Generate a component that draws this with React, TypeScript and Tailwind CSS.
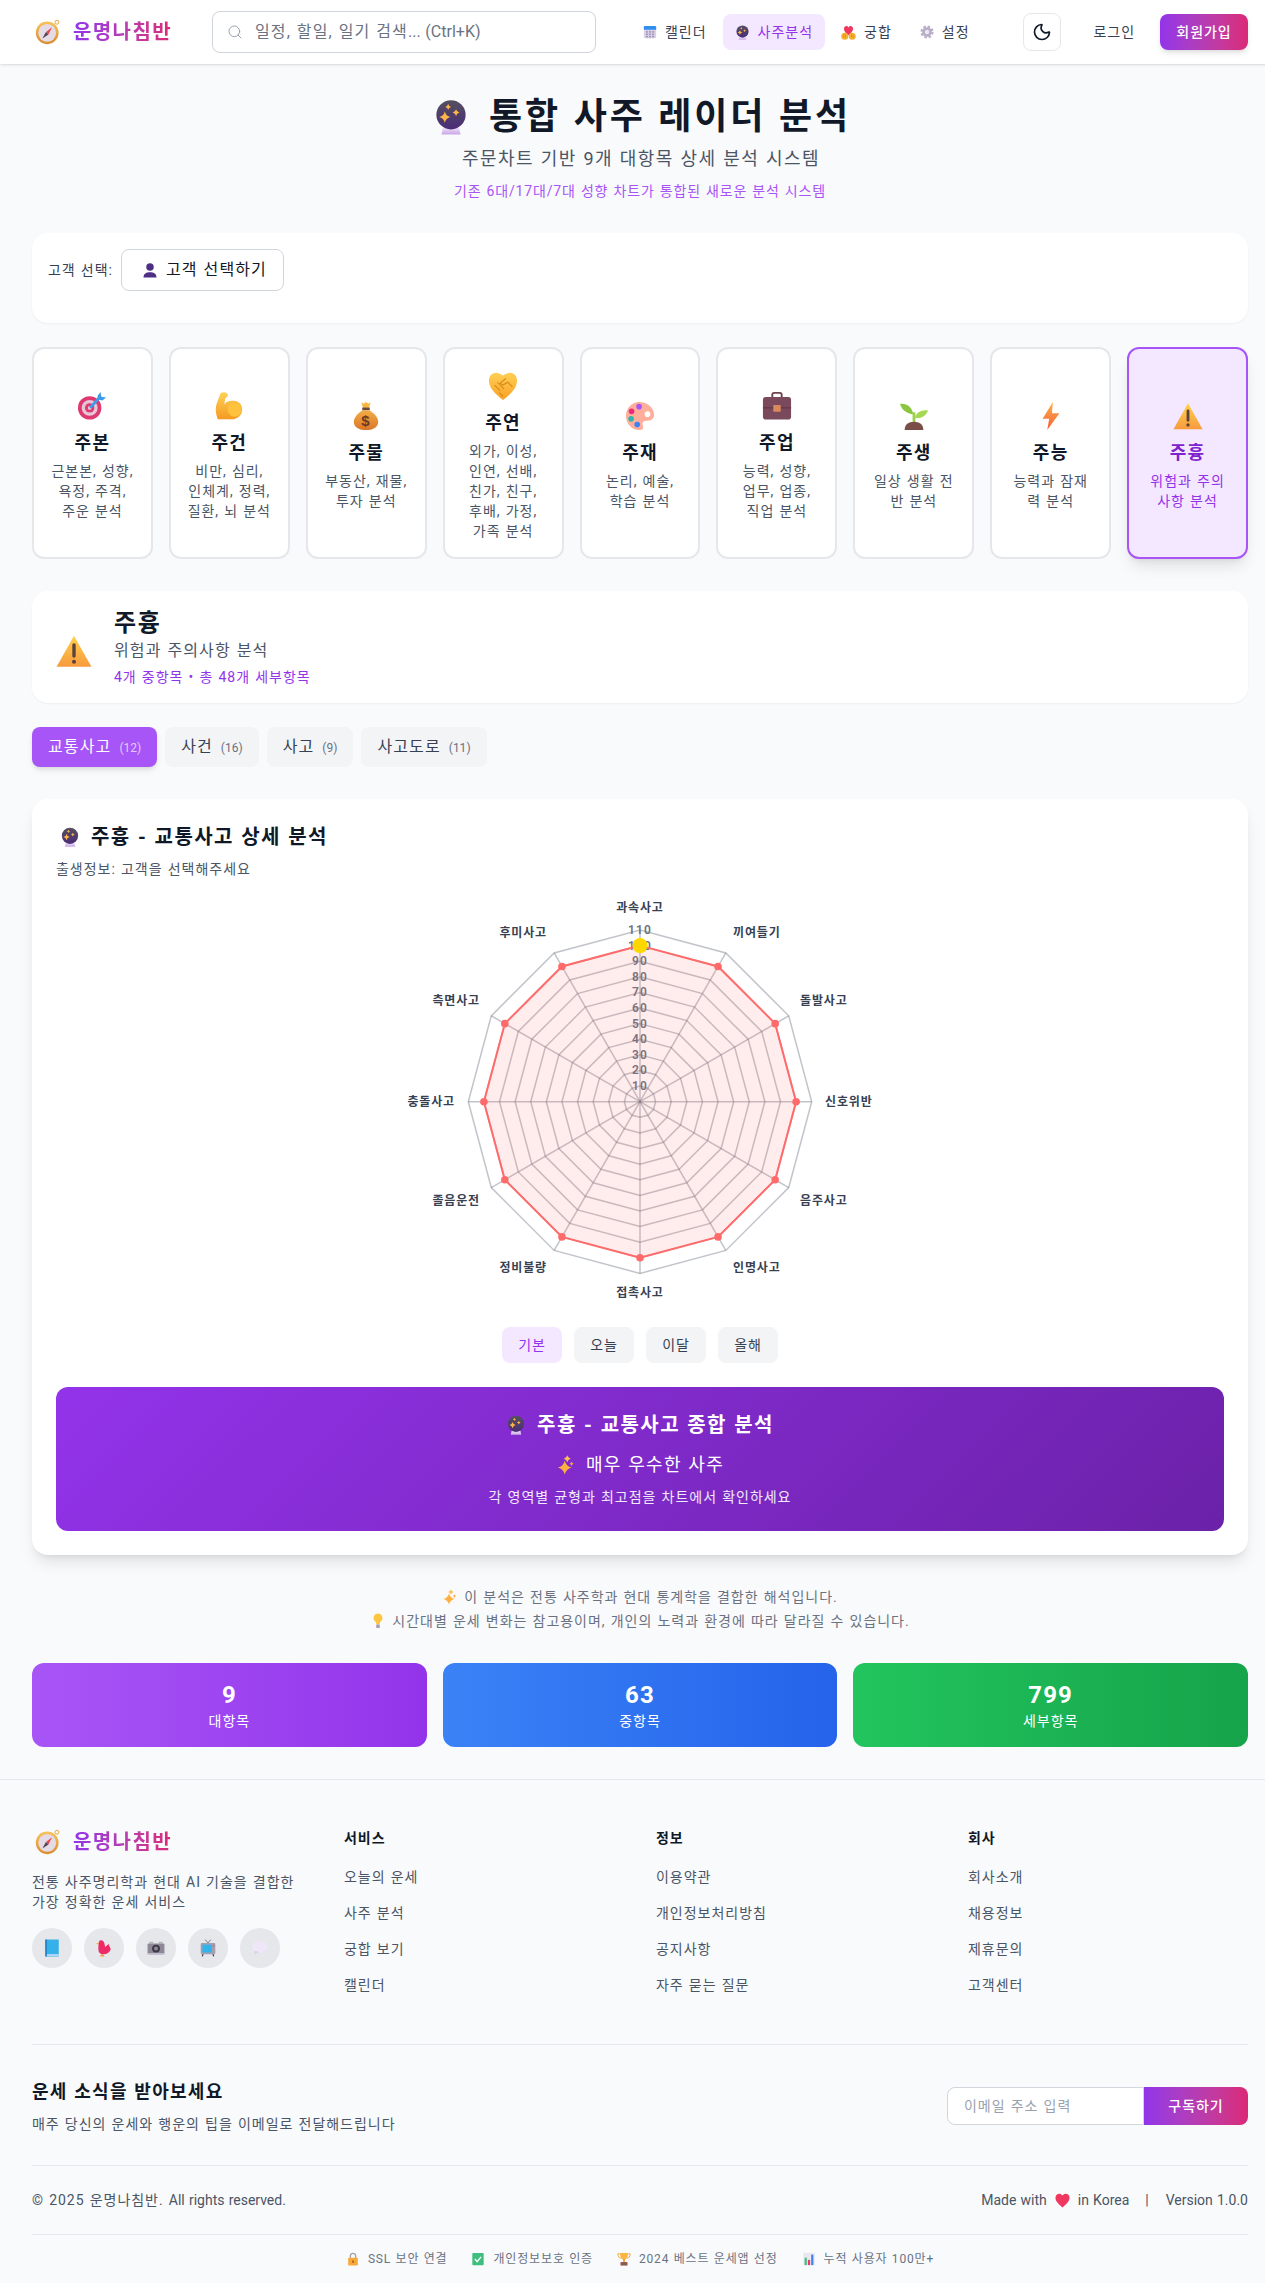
import { Moon, Search } from "lucide-react";
import type { ReactNode } from "react";

type IconProps = { size?: number; className?: string };

function Svg({ size = 16, className = "", children }: IconProps & { children: ReactNode }) {
  return (
    <svg viewBox="0 0 32 32" width={size} height={size} className={`inline-block shrink-0 ${className}`}>
      {children}
    </svg>
  );
}

function Grad({ id, from, to, x2 = 0, y2 = 1 }: { id: string; from: string; to: string; x2?: number; y2?: number }) {
  return (
    <linearGradient id={id} x1="0" y1="0" x2={x2} y2={y2}>
      <stop offset="0" stopColor={from} />
      <stop offset="1" stopColor={to} />
    </linearGradient>
  );
}

const star = (x: number, y: number, r: number) =>
  `M${x} ${y - r}Q${x + r * 0.2} ${y - r * 0.2} ${x + r} ${y}Q${x + r * 0.2} ${y + r * 0.2} ${x} ${y + r}Q${x - r * 0.2} ${y + r * 0.2} ${x - r} ${y}Q${x - r * 0.2} ${y - r * 0.2} ${x} ${y - r}Z`;

const Compass = (p: IconProps) => (
  <Svg {...p}>
    <defs><Grad id="cmp" from="#f8c45c" to="#d98a2e" /></defs>
    <circle cx="27" cy="4" r="2.4" fill="none" stroke="#e9a63f" strokeWidth="1.2" />
    <circle cx="15" cy="17" r="14" fill="url(#cmp)" />
    <circle cx="15" cy="17" r="11" fill="#e4dbe6" />
    <path d="M21 10l-4.500 9-3-3z" fill="#e5484d" />
    <path d="M9 24l4.500-8 3 3z" fill="#4b4453" />
  </Svg>
);

const Ball = (p: IconProps) => (
  <Svg {...p}>
    <defs>
      <Grad id="ball" from="#55505f" to="#4a2c78" />
      <Grad id="base" from="#f1e4fb" to="#c9a8e6" />
    </defs>
    <path d="M9 25h14l1.500 6.500h-17z" fill="url(#base)" />
    <circle cx="16" cy="14" r="13" fill="url(#ball)" />
    <path d={star(10.500, 16, 5)} fill="#fdb748" />
    <path d={star(20.500, 12, 3)} fill="#fdb748" />
    <path d={star(13.500, 7, 2.500)} fill="#fdb748" />
  </Svg>
);

const Calendar = (p: IconProps) => (
  <Svg {...p}>
    <rect x="2" y="2" width="28" height="28" rx="3" fill="#d8d0e6" />
    <path d="M2 11V5a3 3 0 0 1 3-3h22a3 3 0 0 1 3 3v6z" fill="#2f8ff0" />
    <g fill="#9c8fb3">
      {[7, 14, 21].flatMap((x) =>
        [14, 19.500, 25].map((y) => <rect key={`${x}-${y}`} x={x} y={y} width="4" height="3.500" />)
      )}
    </g>
  </Svg>
);

const HeartHands = (p: IconProps) => (
  <Svg {...p}>
    <path d="M16 22C6 15 5 8 7.500 4.500 10.500 1 15 2 16 6c1-4 5.500-5 8.500-1.500C27 8 26 15 16 22z" fill="#f0375f" />
    <circle cx="8" cy="24" r="7.500" fill="#f5b031" />
    <circle cx="24" cy="24" r="7.500" fill="#f5b031" />
    <path d="M6 21v6M9.500 20v7M22.500 20v7M26 21v6" stroke="#c97a1a" strokeWidth="1.200" />
  </Svg>
);

const Gear = (p: IconProps) => (
  <Svg {...p}>
    <circle cx="16" cy="16" r="12.500" fill="none" stroke="#b9aec8" strokeWidth="5" strokeDasharray="5.600 4.220" />
    <circle cx="16" cy="16" r="11" fill="#b9aec8" />
    <circle cx="16" cy="16" r="5" fill="#ece7f2" />
  </Svg>
);

const User = (p: IconProps) => (
  <Svg {...p}>
    <circle cx="16" cy="10" r="7.500" fill="#4e2f86" />
    <path d="M3 31c0-8 6-10.500 13-10.500S29 23 29 31z" fill="#4e2f86" />
  </Svg>
);

const Target = (p: IconProps) => (
  <Svg {...p}>
    <circle cx="13.500" cy="18" r="12.500" fill="#df3a70" />
    <circle cx="13.500" cy="18" r="8.500" fill="#e5c6d8" />
    <circle cx="13.500" cy="18" r="5" fill="#df3a70" />
    <circle cx="13.500" cy="18" r="2" fill="#e5c6d8" />
    <path d="M14 18L24 7" stroke="#3e9bea" strokeWidth="3" />
    <path d="M22 5l3-4 1 5 5 1-4 3-5-1z" fill="#3e9bea" />
  </Svg>
);

const Muscle = (p: IconProps) => (
  <Svg {...p}>
    <defs><Grad id="msc" from="#ffd257" to="#f59a23" /></defs>
    <path d="M9 1.500c3-1 6 1 6 3.500l-3 3-1 6c3-3 6-4 10-3.500 6 .500 9 4 9 9s-3 9.500-9 10.500H4c-2-6-3-11-1-17 1-4 3-7 4-11z" fill="url(#msc)" />
    <circle cx="22" cy="20" r="7.500" fill="#ffc23d" />
  </Svg>
);

const MoneyBag = (p: IconProps) => (
  <Svg {...p}>
    <defs><Grad id="bag" from="#f4ac43" to="#d9762a" /></defs>
    <path d="M11 1l2.500 2L16 1l2.500 2L21 1l-2 7h-6z" fill="#f8b63f" />
    <rect x="12" y="7" width="8" height="3" fill="#6e4a3c" />
    <path d="M12 10h8c5 3 9 8 9 12 0 6-6 9-13 9S3 28 3 22c0-4 4-9 9-12z" fill="url(#bag)" />
    <text data-latin x="16" y="27" textAnchor="middle" fontSize="16" fontWeight="700" fill="#6e3a22" fontFamily="Liberation Sans, sans-serif">$</text>
  </Svg>
);

const Handshake = (p: IconProps) => (
  <Svg {...p}>
    <defs><Grad id="hnd" from="#ffd054" to="#f8a125" /></defs>
    <path d="M16 31C6 23 1 17 1 10 1 4 6 1 10 2c3 .500 5 2 6 3 1-1 3-2.500 6-3 4-1 9 2 9 8 0 7-5 13-15 21z" fill="url(#hnd)" />
    <path d="M7 15l6 6M10 12l7 7M19 8l-6 5 3 2 5-3 5 5M12 23l4 4" stroke="#d98518" strokeWidth="1.100" fill="none" />
  </Svg>
);

const Palette = (p: IconProps) => (
  <Svg {...p}>
    <path d="M15 1C7 1 1 8 1 16s6 15 14 15c4 0 5-2 4-5-1-4 1-5 5-5 5 0 7-3 7-6C31 7 24 1 15 1z" fill="#ffae9c" />
    <circle cx="24" cy="14" r="3" fill="#fff" />
    <circle cx="15" cy="6" r="3" fill="#a855f7" />
    <circle cx="7" cy="11" r="3" fill="#ee2a7b" />
    <circle cx="6.500" cy="19" r="3" fill="#2bb6b0" />
    <circle cx="13" cy="25" r="3" fill="#3b82f6" />
  </Svg>
);

const Briefcase = (p: IconProps) => (
  <Svg {...p}>
    <path d="M11 7V4a2 2 0 0 1 2-2h6a2 2 0 0 1 2 2v3" fill="none" stroke="#6d4350" strokeWidth="2" />
    <rect x="1" y="6.500" width="30" height="24" rx="3" fill="#7a4a5c" />
    <path d="M1 18h30" stroke="#5a3342" strokeWidth="1" />
    <rect x="12" y="15" width="8" height="7" rx="1" fill="#d98a5c" />
  </Svg>
);

const Seedling = (p: IconProps) => (
  <Svg {...p}>
    <rect x="14.500" y="12" width="3" height="12" fill="#9ad14b" />
    <path d="M15 14C9 14 3 10 1 3c7-1 13 3 14 11z" fill="#8cc63f" />
    <path d="M17 18c1-6 7-9 14-8-2 6-8 9-14 8z" fill="#a6d856" />
    <path d="M6 31c0-6 4-9 10-9s10 3 10 9z" fill="#7a4f47" />
  </Svg>
);

const Bolt = (p: IconProps) => (
  <Svg {...p}>
    <defs><Grad id="blt" from="#fdb04b" to="#f5603a" /></defs>
    <path d="M18 1L7 19h7l-2 12 13-18h-8z" fill="url(#blt)" />
  </Svg>
);

const Warning = (p: IconProps) => (
  <Svg {...p}>
    <defs><Grad id="wrn" from="#ffd24d" to="#f79a3e" /></defs>
    <path d="M16 2.500L31.500 30h-31z" fill="url(#wrn)" strokeLinejoin="round" />
    <path d="M16 10.500v10" stroke="#5c4238" strokeWidth="3" strokeLinecap="round" />
    <circle cx="16" cy="25.500" r="1.800" fill="#5c4238" />
  </Svg>
);

const Sparkles = (p: IconProps) => (
  <Svg {...p}>
    <path d={star(14, 20, 11)} fill="#fdb03f" />
    <path d={star(18, 6, 5.500)} fill="#fdbf55" />
    <path d={star(25, 14, 3.500)} fill="#fba43a" />
  </Svg>
);

const Bulb = (p: IconProps) => (
  <Svg {...p}>
    <path d="M16 1a9 9 0 0 0-5.500 16c1.500 1.200 2 3 2 6h7c0-3 .500-4.800 2-6A9 9 0 0 0 16 1z" fill="#fdc640" />
    <rect x="12.500" y="23" width="7" height="7" rx="1" fill="#a79cb8" />
  </Svg>
);

const Book = (p: IconProps) => (
  <Svg {...p}>
    <rect x="4" y="1" width="24" height="30" rx="1" fill="#36b0e8" />
    <rect x="4" y="1" width="3" height="30" fill="#2584c8" />
    <rect x="7" y="27" width="21" height="3" fill="#c6d8f8" />
  </Svg>
);

const Bird = (p: IconProps) => (
  <Svg {...p}>
    <path d="M8 3c4-2 8 0 9 6l1 5 6-5 4 9c-2 6-7 9-13 9-6 0-9-3-9-9 0-5 0-12 2-15z" fill="#ee2a68" />
    <path d="M2 8l5-2v4z" fill="#f59e42" />
    <path d="M11 27l-2 4h8l-2-4z" fill="#f59e42" />
  </Svg>
);

const Camera = (p: IconProps) => (
  <Svg {...p}>
    <rect x="1" y="8" width="30" height="19" rx="2" fill="#8d8796" />
    <rect x="4" y="5" width="7" height="4" fill="#b5afbd" />
    <rect x="21" y="5" width="7" height="4" fill="#b5afbd" />
    <rect x="1" y="25" width="30" height="3" fill="#c5bfd0" />
    <circle cx="16" cy="17" r="7" fill="#3e3946" />
    <circle cx="16" cy="17" r="3.500" fill="#8d8796" />
  </Svg>
);

const Tv = (p: IconProps) => (
  <Svg {...p}>
    <path d="M11 1l5 6 5-6" fill="none" stroke="#6e6878" strokeWidth="1.500" />
    <rect x="3" y="7" width="26" height="20" rx="2" fill="#a79fb0" />
    <rect x="6" y="10" width="17" height="14" fill="#34b3ea" />
    <circle cx="26" cy="12" r="1.200" fill="#e5484d" />
    <path d="M7 27l-1 4M25 27l1 4" stroke="#3a3540" strokeWidth="2" />
  </Svg>
);

const Speech = (p: IconProps) => (
  <Svg {...p}>
    <ellipse cx="16" cy="14" rx="14" ry="10.500" fill="#efe6f8" />
    <path d="M7 21l-1 6 8-4z" fill="#dccdea" />
  </Svg>
);

const Lock = (p: IconProps) => (
  <Svg {...p}>
    <path d="M10 14V9a6 6 0 0 1 12 0v5" fill="none" stroke="#a79fb0" strokeWidth="3" />
    <rect x="5" y="13" width="22" height="18" rx="2" fill="#f9a83c" />
    <rect x="14.500" y="19" width="3" height="6" rx="1.500" fill="#8a4d1a" />
  </Svg>
);

const Check = (p: IconProps) => (
  <Svg {...p}>
    <rect x="3" y="2" width="26" height="28" rx="2" fill="#3fbf7f" />
    <path d="M9 16l5 6 9-11" fill="none" stroke="#fff" strokeWidth="3" />
  </Svg>
);

const Trophy = (p: IconProps) => (
  <Svg {...p}>
    <path d="M6 4H2c0 7 3 10 7 10M26 4h4c0 7-3 10-7 10" fill="none" stroke="#e8a02f" strokeWidth="2" />
    <path d="M7 2h18c0 10-3 15-9 15S7 12 7 2z" fill="#f9b53d" />
    <rect x="14" y="16" width="4" height="7" fill="#e8a02f" />
    <rect x="8" y="23" width="16" height="8" fill="#8d5a50" />
  </Svg>
);

const Bars = (p: IconProps) => (
  <Svg {...p}>
    <rect x="3" y="2" width="26" height="28" fill="#ebe6f0" />
    <rect x="6" y="13" width="5" height="17" fill="#3fbf7f" />
    <rect x="13.500" y="18" width="5" height="12" fill="#ee3a6a" />
    <rect x="21" y="6" width="5" height="24" fill="#3b82f6" />
  </Svg>
);

const Heart = (p: IconProps) => (
  <Svg {...p}>
    <path d="M16 31C6 22 1 17 1 10 1 4 6 1 10 1.500c3 .300 5 2 6 4 1-2 3-3.700 6-4C26 1 31 4 31 10c0 7-5 12-15 21z" fill="#f0375f" />
  </Svg>
);

function Logo() {
  return (
    <div className="flex items-center gap-3">
      <Compass size={26} className="ml-[3px]" />
      <span className="bg-gradient-to-r from-[#9333ea] to-[#db2777] bg-clip-text text-xl font-bold text-transparent">운명나침반</span>
    </div>
  );
}

const categories = [
  { icon: Target, title: "주본", lines: ["근본본, 성향,", "욕정, 주격,", "주운 분석"] },
  { icon: Muscle, title: "주건", lines: ["비만, 심리,", "인체계, 정력,", "질환, 뇌 분석"] },
  { icon: MoneyBag, title: "주물", lines: ["부동산, 재물,", "투자 분석"] },
  { icon: Handshake, title: "주연", lines: ["외가, 이성,", "인연, 선배,", "친가, 친구,", "후배, 가정,", "가족 분석"] },
  { icon: Palette, title: "주재", lines: ["논리, 예술,", "학습 분석"] },
  { icon: Briefcase, title: "주업", lines: ["능력, 성향,", "업무, 업종,", "직업 분석"] },
  { icon: Seedling, title: "주생", lines: ["일상 생활 전", "반 분석"] },
  { icon: Bolt, title: "주능", lines: ["능력과 잠재", "력 분석"] },
  { icon: Warning, title: "주흉", lines: ["위험과 주의", "사항 분석"], active: true },
];

const tabs = [
  { label: "교통사고", count: 12, active: true },
  { label: "사건", count: 16 },
  { label: "사고", count: 9 },
  { label: "사고도로", count: 11 },
];

const axes: { label: string; x: number; y: number; anchor: "start" | "middle" | "end" }[] = [
  { label: "과속사고", x: 240, y: 13, anchor: "middle" },
  { label: "끼여들기", x: 333, y: 38, anchor: "start" },
  { label: "돌발사고", x: 400, y: 106, anchor: "start" },
  { label: "신호위반", x: 425, y: 207, anchor: "start" },
  { label: "음주사고", x: 400, y: 306, anchor: "start" },
  { label: "인명사고", x: 333, y: 373, anchor: "start" },
  { label: "접촉사고", x: 240, y: 398, anchor: "middle" },
  { label: "정비불량", x: 147, y: 373, anchor: "end" },
  { label: "졸음운전", x: 80, y: 306, anchor: "end" },
  { label: "충돌사고", x: 55, y: 207, anchor: "end" },
  { label: "측면사고", x: 80, y: 106, anchor: "end" },
  { label: "후미사고", x: 147, y: 38, anchor: "end" },
];

const cx = 240;
const cy = 206.7;
const unit = 1.561;

function point(i: number, value: number) {
  const a = (Math.PI / 6) * i - Math.PI / 2;
  return [cx + Math.cos(a) * value * unit, cy + Math.sin(a) * value * unit];
}

function ring(value: number) {
  return axes.map((_, i) => point(i, value).map((n) => n.toFixed(2)).join(",")).join(" ");
}

function Radar() {
  const ticks = [10, 20, 30, 40, 50, 60, 70, 80, 90, 100, 110];
  return (
    <svg viewBox="0 0 480 416" width={480} height={416} className="mx-auto mt-4 block">
      {ticks.map((t) => (
        <polygon key={t} points={ring(t)} fill="none" stroke="rgba(107,114,128,0.42)" strokeWidth="1.500" />
      ))}
      {axes.map((_, i) => {
        const [x, y] = point(i, 110);
        return <line key={i} x1={cx} y1={cy} x2={x} y2={y} stroke="rgba(107,114,128,0.42)" strokeWidth="1.500" />;
      })}
      {ticks.map((t) => (
        <text data-latin key={t} x={cx} y={cy - t * unit + 4} textAnchor="middle" fontSize="12" fontWeight="600" fill="#6b7280">
          {t}
        </text>
      ))}
      <polygon points={ring(100)} fill="rgba(255,107,107,0.13)" stroke="#ff6b6b" strokeWidth="2" />
      {axes.map((_, i) => {
        const [x, y] = point(i, 100);
        return i === 0 ? null : <circle key={i} cx={x} cy={y} r="3.800" fill="#ff6b6b" />;
      })}
      <circle cx={cx} cy={cy - 100 * unit} r="7.500" fill="#ffd700" />
      {axes.map((a) => (
        <text key={a.label} x={a.x} y={a.y + 4} textAnchor={a.anchor} fontSize="12" fontWeight="700" fill="#374151">
          {a.label}
        </text>
      ))}
    </svg>
  );
}

const footerCols = [
  { title: "서비스", links: ["오늘의 운세", "사주 분석", "궁합 보기", "캘린더"] },
  { title: "정보", links: ["이용약관", "개인정보처리방침", "공지사항", "자주 묻는 질문"] },
  { title: "회사", links: ["회사소개", "채용정보", "제휴문의", "고객센터"] },
];

export default function App() {
  return (
    <div className="h-[2283px] overflow-hidden bg-[#f9fafb]">
    <div className="w-[1280px] font-['Roboto','Noto_Sans_CJK_KR',sans-serif] text-[#111827] [&_*:not([data-latin])]:tracking-[0.07em] [&_*:not([data-latin])]:[word-spacing:0.05em]">
      <header className="flex h-16 items-center bg-white px-8 shadow-sm">
        <Logo />
        <div className="ml-10 flex h-[42px] w-[384px] items-center gap-3 rounded-lg border border-gray-300 px-3.5">
          <Search className="h-4 w-4 text-gray-400" strokeWidth={1.5} />
          <span className="text-base text-gray-500">일정, 할일, 일기 검색<span data-latin className="tracking-normal">... (Ctrl+K)</span></span>
        </div>
        <nav className="ml-[35px] flex items-center gap-1">
          <a className="flex h-9 items-center gap-2 rounded-lg px-3 text-sm text-gray-700"><Calendar size={14} />캘린더</a>
          <a className="flex h-9 items-center gap-2 rounded-lg bg-[#f3e8ff] px-3 text-sm text-[#9333ea]"><Ball size={15} />사주분석</a>
          <a className="flex h-9 items-center gap-2 rounded-lg px-3 text-sm text-gray-700"><HeartHands size={15} />궁합</a>
          <a className="flex h-9 items-center gap-2 rounded-lg px-3 text-sm text-gray-700"><Gear size={14} />설정</a>
        </nav>
        <button className="ml-auto flex h-[38px] w-[38px] items-center justify-center rounded-lg border border-gray-200 bg-white">
          <Moon className="h-5 w-5 text-gray-900" />
        </button>
        <span className="ml-8 text-sm text-gray-700">로그인</span>
        <button className="ml-[25px] h-9 w-[88px] rounded-lg bg-gradient-to-r from-[#9333ea] to-[#db2777] text-sm font-medium text-white shadow-md">회원가입</button>
      </header>

      <main className="px-8 py-8">
        <div className="text-center">
          <h1 data-latin className="mt-px flex h-10 items-center justify-center gap-5 pl-1 text-4xl font-bold tracking-[0.08em]"><Ball size={36} />통합 사주 레이더 분석</h1>
          <p data-latin className="mt-2 pl-0.5 text-lg tracking-[0.08em] text-gray-600">주문차트 기반 9개 대항목 상세 분석 시스템</p>
          <p data-latin className="mt-2 text-sm tracking-[0.06em] text-[#a855f7]">기존 6대/17대/7대 성향 차트가 통합된 새로운 분석 시스템</p>
        </div>

        <section className="mt-8 rounded-2xl bg-white p-4 pb-8 shadow-[0_1px_2px_rgba(0,0,0,0.05)]">
          <div className="flex items-center gap-2">
            <span className="text-sm text-gray-700">고객 선택:</span>
            <button className="flex h-[42px] items-center gap-2 rounded-lg border border-gray-300 bg-white pr-4 pl-5 text-base text-gray-900"><User size={16} />고객 선택하기</button>
          </div>
        </section>

        <section className="mt-6 grid grid-cols-9 gap-4">
          {categories.map((c) => (
            <div key={c.title} className={`flex h-[212px] flex-col items-center justify-center rounded-xl border-2 px-2 text-center ${c.active ? "border-[#a855f7] bg-[#f3e8ff] shadow-lg" : "border-gray-200 bg-white"}`}>
              <div className="mb-2 flex h-9 items-end"><c.icon size={30} /></div>
              <h3 className={`text-lg leading-7 font-bold ${c.active ? "text-[#7e22ce]" : "text-gray-900"}`}>{c.title}</h3>
              <p className={`mt-1 text-sm ${c.active ? "text-[#9333ea]" : "text-gray-600"}`}>
                {c.lines.map((l) => <span key={l} className="block">{l}</span>)}
              </p>
            </div>
          ))}
        </section>

        <section className="mt-8 flex items-center gap-[22px] rounded-2xl bg-white px-6 py-4 shadow-[0_1px_2px_rgba(0,0,0,0.05)]">
          <Warning size={36} className="mt-2" />
          <div>
            <h2 className="text-2xl font-bold">주흉</h2>
            <p className="text-base text-gray-600">위험과 주의사항 분석</p>
            <p className="mt-1 text-sm text-[#9333ea]">4개 중항목 • 총 48개 세부항목</p>
          </div>
        </section>

        <div className="mt-6 flex gap-2">
          {tabs.map((t) => (
            <button key={t.label} className={`h-10 rounded-lg px-4 text-base ${t.active ? "bg-[#a855f7] text-white shadow-md" : "bg-gray-100 text-gray-700"}`}>
              {t.label}
              <span data-latin className={`ml-2 text-xs tracking-normal ${t.active ? "text-white/70" : "text-gray-500"}`}>({t.count})</span>
            </button>
          ))}
        </div>

        <section className="mt-8 rounded-2xl bg-white p-6 shadow-lg">
          <h2 className="flex items-center gap-[11px] text-xl font-bold text-gray-900"><Ball size={20} className="ml-1" />주흉 - 교통사고 상세 분석</h2>
          <p className="mt-2 text-sm text-gray-600">출생정보: 고객을 선택해주세요</p>
          <Radar />
          <div className="mt-4 flex justify-center gap-3">
            {["기본", "오늘", "이달", "올해"].map((t, i) => (
              <button key={t} className={`h-9 w-[60px] rounded-lg text-sm ${i === 0 ? "bg-[#f3e8ff] text-[#9333ea]" : "bg-gray-100 text-gray-700"}`}>{t}</button>
            ))}
          </div>
          <div className="mt-6 rounded-xl bg-[linear-gradient(135deg,#9333ea,#6b21a8)] p-6 text-center text-white">
            <h3 className="flex items-center justify-center gap-[11px] text-xl leading-7 font-bold"><Ball size={20} />주흉 - 교통사고 종합 분석</h3>
            <p className="mt-3 flex items-center justify-center gap-2.5 text-lg"><Sparkles size={20} />매우 우수한 사주</p>
            <p className="mt-2 text-sm text-white/90">각 영역별 균형과 최고점을 차트에서 확인하세요</p>
          </div>
        </section>

        <div className="mt-8 text-center text-sm text-gray-500">
          <p className="flex items-center justify-center gap-1.5"><Sparkles size={16} />이 분석은 전통 사주학과 현대 통계학을 결합한 해석입니다.</p>
          <p className="mt-1 flex items-center justify-center gap-1.5"><Bulb size={16} />시간대별 운세 변화는 참고용이며, 개인의 노력과 환경에 따라 달라질 수 있습니다.</p>
        </div>

        <div className="mt-8 grid grid-cols-3 gap-4 text-center text-white">
          <div className="rounded-xl bg-gradient-to-r from-[#a855f7] to-[#9333ea] p-4"><div data-latin className="text-2xl font-bold">9</div><div className="text-sm">대항목</div></div>
          <div className="rounded-xl bg-gradient-to-r from-[#3b82f6] to-[#2563eb] p-4"><div data-latin className="text-2xl font-bold">63</div><div className="text-sm">중항목</div></div>
          <div className="rounded-xl bg-gradient-to-r from-[#22c55e] to-[#16a34a] p-4"><div data-latin className="text-2xl font-bold">799</div><div className="text-sm">세부항목</div></div>
        </div>
      </main>

      <footer className="border-t border-gray-200 px-8 pt-12 pb-4">
        <div className="grid grid-cols-4 gap-8 pb-[49px]">
          <div>
            <Logo />
            <p className="mt-4 text-sm text-gray-600">전통 사주명리학과 현대 AI 기술을 결합한<br />가장 정확한 운세 서비스</p>
            <div className="mt-4 flex gap-3">
              {[Book, Bird, Camera, Tv, Speech].map((I, i) => (
                <span key={i} className="flex h-10 w-10 items-center justify-center rounded-full bg-gray-200"><I size={18} /></span>
              ))}
            </div>
          </div>
          {footerCols.map((col) => (
            <div key={col.title}>
              <h4 className="mb-[19px] text-sm font-bold text-gray-900">{col.title}</h4>
              <ul className="flex flex-col gap-4 text-sm text-gray-600">
                {col.links.map((l) => <li key={l}>{l}</li>)}
              </ul>
            </div>
          ))}
        </div>

        <div className="flex items-center justify-between border-t border-gray-200 pt-[33px] pb-[31px]">
          <div>
            <h3 className="text-lg font-bold text-gray-900">운세 소식을 받아보세요</h3>
            <p className="mt-2 text-sm text-gray-600">매주 당신의 운세와 행운의 팁을 이메일로 전달해드립니다</p>
          </div>
          <div className="flex h-[38px]">
            <div className="flex w-[197px] items-center rounded-l-lg border border-gray-300 bg-white px-4 text-sm text-gray-400">이메일 주소 입력</div>
            <button className="w-[104px] rounded-r-lg bg-gradient-to-r from-[#9333ea] to-[#db2777] text-sm font-medium text-white">구독하기</button>
          </div>
        </div>

        <div className="flex items-center justify-between border-t border-gray-200 pt-6 pb-6 text-sm text-gray-600">
          <span>© 2025 운명나침반. <span data-latin className="tracking-normal">All rights reserved.</span></span>
          <div className="flex items-center">
            <span data-latin className="tracking-normal">Made with</span>
            <Heart size={15} className="mx-2" />
            <span data-latin className="tracking-normal">in Korea</span>
            <span className="mx-4">|</span>
            <span data-latin className="tracking-normal">Version 1.0.0</span>
          </div>
        </div>

        <div className="flex items-center justify-center gap-6 border-t border-gray-200 pt-4 text-xs text-gray-500">
          <span className="flex items-center gap-2"><Lock size={14} />SSL 보안 연결</span>
          <span className="flex items-center gap-2"><Check size={14} />개인정보보호 인증</span>
          <span className="flex items-center gap-2"><Trophy size={14} />2024 베스트 운세앱 선정</span>
          <span className="flex items-center gap-2"><Bars size={14} />누적 사용자 100만+</span>
        </div>
      </footer>
    </div>
    </div>
  );
}
